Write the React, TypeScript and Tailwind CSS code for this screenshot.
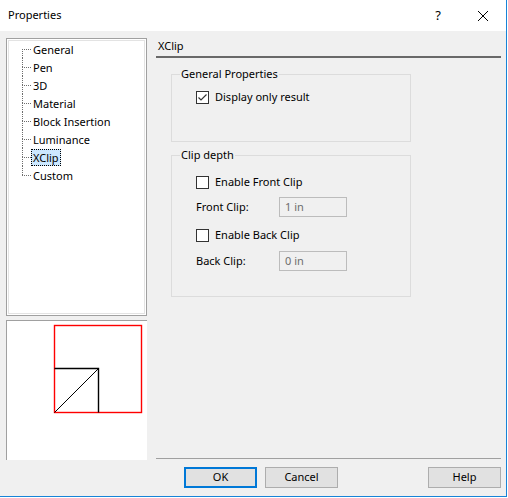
import type { ReactNode } from 'react';

const items = ['General', 'Pen', '3D', 'Material', 'Block Insertion', 'Luminance', 'XClip', 'Custom'];
const selected = 'XClip';

function Check({ checked }: { checked?: boolean }) {
  return (
    <span className="w-[13px] h-[13px] border border-[#333333] bg-white flex items-center justify-center shrink-0">
      {checked && (
        <svg width="11" height="11" viewBox="0 0 11 11">
          <path d="M1.5 5.5 L4 8 L9.5 2.5" fill="none" stroke="#333" strokeWidth="1.2" />
        </svg>
      )}
    </span>
  );
}

function Group({ title, className, children }: { title: string; className: string; children: ReactNode }) {
  return (
    <fieldset className={`border border-[#dcdcdc] ml-[15px] w-[240px] ${className}`}>
      <legend className="ml-[8px] px-[1px] leading-[16px]">{title}</legend>
      {children}
    </fieldset>
  );
}

function Field({ label, value, className }: { label: string; value: string; className: string }) {
  return (
    <div className={`flex items-center pl-[24px] ${className}`}>
      <span className="w-[83px] leading-[16px]">{label}</span>
      <div className="w-[68px] h-[20px] border border-[#bcbcbc] flex items-center pl-[5px] text-[#6d6d6d]">
        {value}
      </div>
    </div>
  );
}

function Button({ children, primary, className }: { children: ReactNode; primary?: boolean; className?: string }) {
  return (
    <button
      className={`w-[73px] h-[21px] bg-[#e1e1e1] flex items-center justify-center ${
        primary ? 'border-2 border-[#0078d7]' : 'border border-[#adadad]'
      } ${className ?? ''}`}
    >
      {children}
    </button>
  );
}

export default function App() {
  return (
    <div className="w-[508px] h-[498px] bg-white text-[11px] text-black" style={{ fontFamily: '"Noto Sans", sans-serif' }}>
      <div className="w-[507px] h-[497px] flex flex-col border-r border-b border-[#1883d7] bg-[#f0f0f0]">
        <div className="h-[31px] bg-white flex items-center shrink-0">
          <span className="pl-[8px]">Properties</span>
          <div className="ml-auto flex h-full">
            <div className="w-[46px] flex items-center justify-center text-[13px] pl-[2px]">?</div>
            <div className="w-[46px] flex items-center justify-center">
              <svg width="10" height="10" viewBox="0 0 10 10">
                <path d="M0 0 L10 10 M10 0 L0 10" stroke="#000" strokeWidth="1" />
              </svg>
            </div>
          </div>
        </div>

        <div className="flex flex-1 pt-[7px] pl-[6px]">
          <div className="w-[141px] flex flex-col">
            <div className="h-[278px] border border-[#a0a0a0] bg-white p-[1px]">
              <div className="h-full border border-[#e3e3e3] bg-white">
                <div className="-mt-[1px]">
                  {items.map((it, i) => (
                    <div key={it} className="flex items-center h-[18px] pl-[13px]">
                      <div className="w-[9px] h-[18px] flex flex-col">
                        <div className={`h-[9px] ${i > 0 ? 'border-l border-dotted border-[#6d6d6d]' : ''}`} />
                        <div
                          className={`h-[9px] border-t border-dotted border-[#6d6d6d] ${
                            i < items.length - 1 ? 'border-l' : ''
                          }`}
                        />
                      </div>
                      <span
                        className={`h-[17px] px-[1px] leading-[15px] border ${
                          it === selected ? 'bg-[#cce8ff] border-dotted border-black' : 'border-transparent'
                        }`}
                      >
                        {it}
                      </span>
                    </div>
                  ))}
                </div>
              </div>
            </div>
            <div className="mt-[4px] h-[140px] border-l border-t border-[#a0a0a0] bg-white">
              <svg width="140" height="139" viewBox="0 0 140 139">
                <rect x="47.5" y="4.5" width="87" height="87" fill="none" stroke="#ff0000" strokeWidth="1.4" />
                <path d="M47.5 47.5 H91.5 V91.5" fill="none" stroke="#000" strokeWidth="1.4" />
                <path d="M47.5 91.5 L91.5 47.5" fill="none" stroke="#000" strokeWidth="1" />
              </svg>
            </div>
          </div>

          <div className="ml-[9px] w-[345px] flex flex-col pb-[8px]">
            <div className="leading-[16px] pl-[2px]">XClip</div>
            <div className="mt-[2px] h-[2px] bg-[#696969]" />

            <Group title="General Properties" className="mt-[8px] h-[76px]">
              <label className="flex items-center gap-[6px] pl-[24px] mt-[7px] leading-[16px]">
                <Check checked />
                Display only result
              </label>
            </Group>

            <Group title="Clip depth" className="mt-[5px] h-[150px]">
              <label className="flex items-center gap-[6px] pl-[24px] mt-[11px] leading-[16px]">
                <Check />
                Enable Front Clip
              </label>
              <Field label="Front Clip:" value="1 in" className="mt-[7px]" />
              <label className="flex items-center gap-[6px] pl-[24px] mt-[10px] leading-[16px]">
                <Check />
                Enable Back Clip
              </label>
              <Field label="Back Clip:" value="0 in" className="mt-[8px]" />
            </Group>

            <div className="mt-auto h-[1px] bg-[#a0a0a0]" />
            <div className="flex mt-[8px]">
              <Button primary className="ml-[28px]">OK</Button>
              <Button className="ml-[8px]">Cancel</Button>
              <Button className="ml-auto">Help</Button>
            </div>
          </div>
        </div>
      </div>
    </div>
  );
}
